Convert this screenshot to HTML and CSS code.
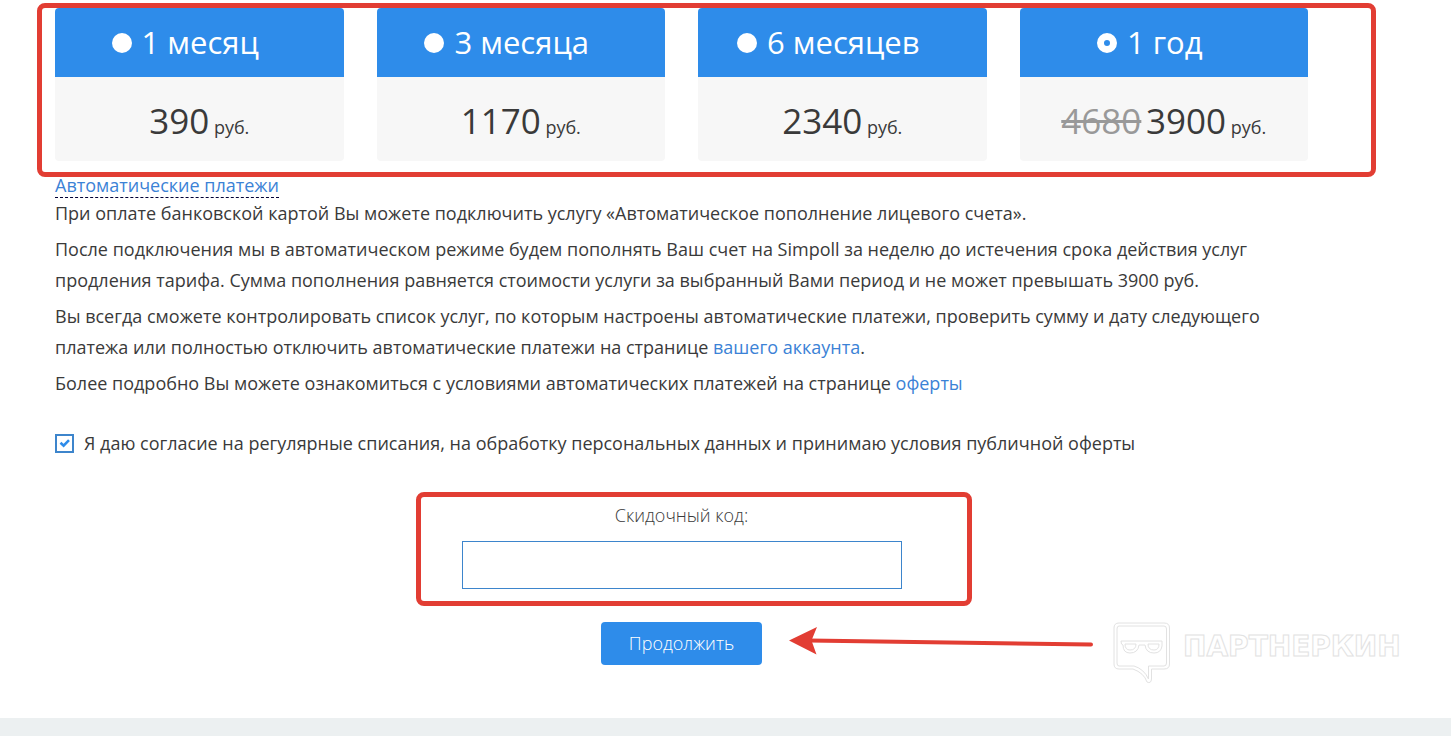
FILE: index.html
```html
<!DOCTYPE html>
<html lang="ru">
<head>
<meta charset="utf-8">
<meta name="viewport" content="width=device-width, initial-scale=1">
<title>Оплата тарифа</title>
<link rel="stylesheet" href="styles.css">
</head>
<body>
<main class="page">
  <form class="payment">
    <div class="tariffs">
      <label class="tariff">
        <span class="tariff-head"><input class="radio" type="radio" name="period"> 1 месяц</span>
        <span class="tariff-price"><span class="sum">390</span> руб.</span>
      </label>
      <label class="tariff">
        <span class="tariff-head"><input class="radio" type="radio" name="period"> 3 месяца</span>
        <span class="tariff-price"><span class="sum">1170</span> руб.</span>
      </label>
      <label class="tariff">
        <span class="tariff-head"><input class="radio" type="radio" name="period"> 6 месяцев</span>
        <span class="tariff-price"><span class="sum">2340</span> руб.</span>
      </label>
      <label class="tariff">
        <span class="tariff-head"><input class="radio" type="radio" name="period" checked> 1 год</span>
        <span class="tariff-price"><del class="sum old">4680</del> <span class="sum">3900</span> руб.</span>
      </label>
      <div class="frame frame-tariffs"></div>
    </div>

    <section class="auto">
      <a class="auto-toggle" href="#">Автоматические платежи</a>
      <p>При оплате банковской картой Вы можете подключить услугу «Автоматическое пополнение лицевого счета».</p>
      <p>После подключения мы в автоматическом режиме будем пополнять Ваш счет на Simpoll за неделю до истечения срока действия услуг продления тарифа. Сумма пополнения равняется стоимости услуги за выбранный Вами период и не может превышать 3900 руб.</p>
      <p>Вы всегда сможете контролировать список услуг, по которым настроены автоматические платежи, проверить сумму и дату следующего платежа или полностью отключить автоматические платежи на странице <a href="#">вашего аккаунта</a>.</p>
      <p>Более подробно Вы можете ознакомиться с условиями автоматических платежей на странице <a href="#">оферты</a></p>
    </section>

    <label class="agree">
      <span class="check">
        <input class="check-input" type="checkbox" checked>
        <svg class="check-mark" viewBox="0 0 19 19" aria-hidden="true"><path d="M5.5 8.8 8.6 11.6 14 6.2"/></svg>
      </span>
      Я даю согласие на регулярные списания, на обработку персональных данных и принимаю условия публичной оферты
    </label>

    <div class="discount">
      <label class="discount-label" for="code">Скидочный код:</label>
      <input class="discount-input" id="code" type="text">
      <div class="frame frame-discount"></div>
    </div>

    <div class="submit">
      <button class="submit-button" type="button">Продолжить</button>
      <svg class="arrow" viewBox="0 0 306 30" aria-hidden="true">
        <path class="arrow-line" d="M20 14.5 302 18.5"/>
        <path class="arrow-head" d="M0 14.5 28 1 22.500 14.500 27.500 28.500Z"/>
      </svg>
      <div class="watermark">
        <svg class="watermark-icon" viewBox="0 0 58 63" aria-hidden="true">
          <path d="M6 1H51Q56.500 1 56.500 6V42Q56.500 47 51 47H38.500V57Q38 62 34 60Q31 51 20 47H6Q1 47 1 42V6Q1 1 6 1Z"/>
          <path d="M6 4H51Q53.500 4 53.500 7V41Q53.500 44 51 44H35.500V57Q31 47 21 44H6Q4 44 4 41V7Q4 4 6 4Z"/>
          <path d="M8 19H49V24Q48 31 41 31Q33 31 32 23H26Q25 31 17 31Q10 31 10 23Q8 23 8 19Z"/>
          <path d="M12 22H23Q23 28 17 28Q12 28 12 22ZM35 22H46Q46 28 41 28Q35 28 35 22Z"/>
        </svg>
        <span class="watermark-text">ПАРТНЕРКИН</span>
      </div>
    </div>
  </form>
</main>
<footer class="footer"></footer>
</body>
</html>
```
FILE: styles.css
```css
* {
  box-sizing: border-box;
}

body {
  margin: 0;
  min-height: 100vh;
  display: flex;
  flex-direction: column;
  background: #fff;
  color: #3a3a3a;
  font: 400 18px/31px "Open Sans", "Noto Sans", sans-serif;
  overflow-x: hidden;
}

a {
  color: #3b82d6;
  text-decoration: none;
}

.page {
  padding: 8px 143px 53px 55px;
}

.tariffs {
  position: relative;
  display: grid;
  grid-template-columns: repeat(4, 1fr);
  gap: 33px;
}

.tariff {
  display: flex;
  flex-direction: column;
  border-radius: 4px;
  overflow: hidden;
  background: #f7f7f7;
  text-align: center;
}

.tariff-head {
  display: flex;
  align-items: center;
  justify-content: center;
  gap: 10px;
  height: 69px;
  padding-right: 28px;
  background: #2e8cea;
  color: #fff;
  font-size: 31px;
}

.radio {
  appearance: none;
  width: 20px;
  height: 20px;
  margin: 0;
  border-radius: 50%;
  background: #fff;
}

.radio:checked {
  border: 7px solid #fff;
  background: #2e8cea;
}

.tariff-price {
  height: 84px;
  padding-top: 22px;
  line-height: 44px;
}

.sum {
  font-size: 35px;
}

.old {
  color: #999;
}

.frame {
  position: absolute;
  border: 5px solid #e23d33;
  border-radius: 8px;
  pointer-events: none;
}

.frame-tariffs {
  inset: -5px -68px -16px -18px;
}

.auto {
  padding: 13px 15px 0 0;
}

.auto-toggle {
  display: table;
  border-bottom: 1px dashed #003;
  line-height: 23px;
}

.auto p {
  margin: 0 0 5px;
}

.agree {
  display: flex;
  align-items: center;
  gap: 10px;
  margin-top: 29px;
}

.check {
  display: grid;
  width: 19px;
  height: 19px;
}

.check-input,
.check-mark {
  grid-area: 1 / 1;
  width: 19px;
  height: 19px;
}

.check-input {
  appearance: none;
  margin: 0;
  border: 2px solid #3d85cc;
}

.check-mark {
  fill: none;
  stroke: #2e8cea;
  stroke-width: 2.6;
  pointer-events: none;
}

.discount {
  position: relative;
  width: 440px;
  margin: 41px auto 0;
}

.discount-label {
  display: block;
  margin-bottom: 10px;
  text-align: center;
  font-weight: 300;
}

.discount-input {
  display: block;
  width: 100%;
  height: 48px;
  padding: 0 12px;
  border: 1px solid #3d85cc;
  background: #fff;
  font: inherit;
}

.frame-discount {
  inset: -8px -70px -17px -46px;
}

.submit {
  position: relative;
  width: 161px;
  margin: 33px auto 0;
}

.submit-button {
  width: 100%;
  height: 43px;
  padding: 0;
  border: 0;
  border-radius: 4px;
  background: #2e8cea;
  color: #fff;
  font: inherit;
  font-weight: 300;
}

.arrow {
  position: absolute;
  left: 188px;
  top: 4px;
  width: 306px;
  height: 30px;
}

.arrow-line {
  fill: none;
  stroke: #e23d33;
  stroke-width: 4;
  stroke-linecap: round;
}

.arrow-head {
  fill: #e23d33;
}

.watermark {
  position: absolute;
  left: 512px;
  top: 0;
  display: flex;
  gap: 12px;
}

.watermark-icon {
  width: 58px;
  height: 63px;
  fill: none;
  stroke: #e2e2e2;
}

.watermark-text {
  color: #fff;
  font: 700 28px/50px "DejaVu Sans", sans-serif;
  -webkit-text-stroke: 1px #e2e2e2;
}

.footer {
  flex: 1;
  min-height: 18px;
  background: #ecf0f1;
}
```
